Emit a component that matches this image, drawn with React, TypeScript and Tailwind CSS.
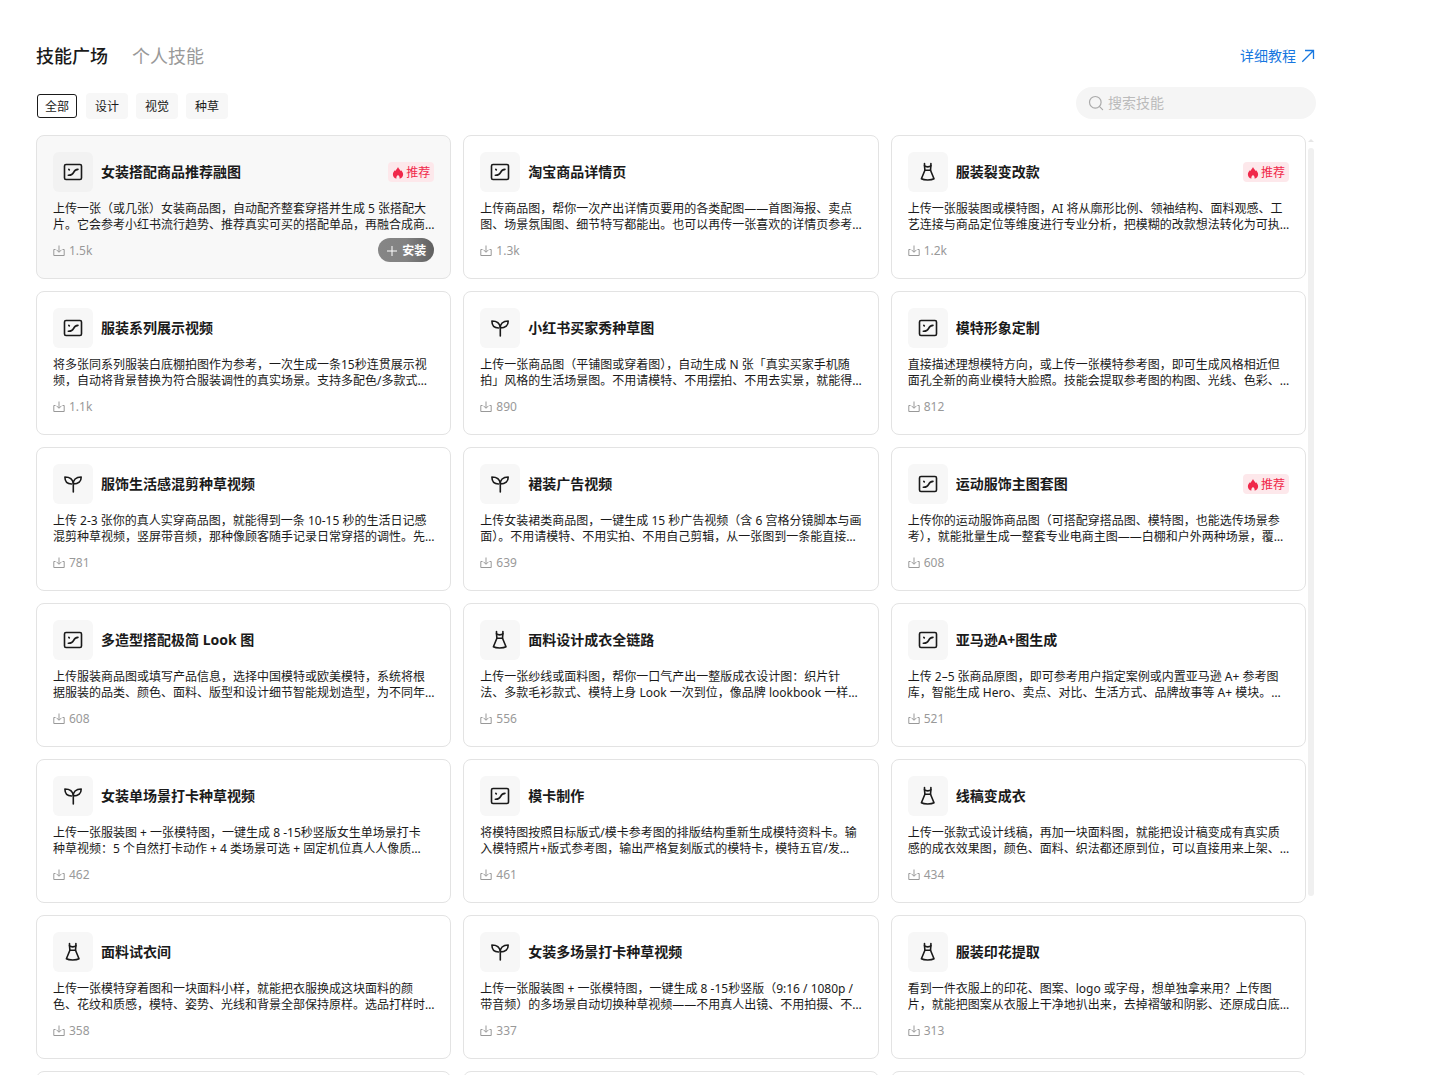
type IconName = 'image' | 'sprout' | 'dress'

type Skill = {
  title: string
  desc: string
  count: string
  icon: IconName
  hot?: boolean
  active?: boolean
}

const skills: Skill[] = [
  { title: '女装搭配商品推荐融图', icon: 'image', count: '1.5k', hot: true, active: true, desc: '上传一张（或几张）女装商品图，自动配齐整套穿搭并生成 5 张搭配大片。它会参考小红书流行趋势、推荐真实可买的搭配单品，再融合成商…' },
  { title: '淘宝商品详情页', icon: 'image', count: '1.3k', desc: '上传商品图，帮你一次产出详情页要用的各类配图——首图海报、卖点图、场景氛围图、细节特写都能出。也可以再传一张喜欢的详情页参考…' },
  { title: '服装裂变改款', icon: 'dress', count: '1.2k', hot: true, desc: '上传一张服装图或模特图，AI 将从廓形比例、领袖结构、面料观感、工艺连接与商品定位等维度进行专业分析，把模糊的改款想法转化为可执…' },
  { title: '服装系列展示视频', icon: 'image', count: '1.1k', desc: '将多张同系列服装白底棚拍图作为参考，一次生成一条15秒连贯展示视频，自动将背景替换为符合服装调性的真实场景。支持多配色/多款式…' },
  { title: '小红书买家秀种草图', icon: 'sprout', count: '890', desc: '上传一张商品图（平铺图或穿着图），自动生成 N 张「真实买家手机随拍」风格的生活场景图。不用请模特、不用摆拍、不用去实景，就能得…' },
  { title: '模特形象定制', icon: 'image', count: '812', desc: '直接描述理想模特方向，或上传一张模特参考图，即可生成风格相近但面孔全新的商业模特大脸照。技能会提取参考图的构图、光线、色彩、…' },
  { title: '服饰生活感混剪种草视频', icon: 'sprout', count: '781', desc: '上传 2-3 张你的真人实穿商品图，就能得到一条 10-15 秒的生活日记感混剪种草视频，竖屏带音频，那种像顾客随手记录日常穿搭的调性。先…' },
  { title: '裙装广告视频', icon: 'sprout', count: '639', desc: '上传女装裙类商品图，一键生成 15 秒广告视频（含 6 宫格分镜脚本与画面）。不用请模特、不用实拍、不用自己剪辑，从一张图到一条能直接…' },
  { title: '运动服饰主图套图', icon: 'image', count: '608', hot: true, desc: '上传你的运动服饰商品图（可搭配穿搭品图、模特图，也能选传场景参考），就能批量生成一整套专业电商主图——白棚和户外两种场景，覆…' },
  { title: '多造型搭配极简 Look 图', icon: 'image', count: '608', desc: '上传服装商品图或填写产品信息，选择中国模特或欧美模特，系统将根据服装的品类、颜色、面料、版型和设计细节智能规划造型，为不同年…' },
  { title: '面料设计成衣全链路', icon: 'dress', count: '556', desc: '上传一张纱线或面料图，帮你一口气产出一整版成衣设计图：织片针法、多款毛衫款式、模特上身 Look 一次到位，像品牌 lookbook 一样…' },
  { title: '亚马逊A+图生成', icon: 'image', count: '521', desc: '上传 2–5 张商品原图，即可参考用户指定案例或内置亚马逊 A+ 参考图库，智能生成 Hero、卖点、对比、生活方式、品牌故事等 A+ 模块。…' },
  { title: '女装单场景打卡种草视频', icon: 'sprout', count: '462', desc: '上传一张服装图 + 一张模特图，一键生成 8 -15秒竖版女生单场景打卡\n种草视频：5 个自然打卡动作 + 4 类场景可选 + 固定机位真人人像质…' },
  { title: '模卡制作', icon: 'image', count: '461', desc: '将模特图按照目标版式/模卡参考图的排版结构重新生成模特资料卡。输入模特照片+版式参考图，输出严格复刻版式的模特卡，模特五官/发…' },
  { title: '线稿变成衣', icon: 'dress', count: '434', desc: '上传一张款式设计线稿，再加一块面料图，就能把设计稿变成有真实质感的成衣效果图，颜色、面料、织法都还原到位，可以直接用来上架、…' },
  { title: '面料试衣间', icon: 'dress', count: '358', desc: '上传一张模特穿着图和一块面料小样，就能把衣服换成这块面料的颜色、花纹和质感，模特、姿势、光线和背景全部保持原样。选品打样时…' },
  { title: '女装多场景打卡种草视频', icon: 'sprout', count: '337', desc: '上传一张服装图 + 一张模特图，一键生成 8 -15秒竖版（9:16 / 1080p / 带音频）的多场景自动切换种草视频——不用真人出镜、不用拍摄、不…' },
  { title: '服装印花提取', icon: 'dress', count: '313', desc: '看到一件衣服上的印花、图案、logo 或字母，想单独拿来用？上传图片，就能把图案从衣服上干净地扒出来，去掉褶皱和阴影、还原成白底…' },
]

const filters = ['全部', '设计', '视觉', '种草']

function SkillIcon({ name }: { name: IconName }) {
  return (
    <svg viewBox="0 0 20 20" className="size-5" fill="none" stroke="currentColor" strokeWidth="1.6" strokeLinecap="round" strokeLinejoin="round" aria-hidden="true">
      {name === 'image' && (
        <>
          <rect x="1.5" y="2.5" width="17" height="15" rx="1.5" />
          <path d="M5.3 13.2c3 .1 4.300-.6 5.200-2.600.9-2.100 2.100-3 4.500-3.200" />
          <path d="M5.8 7.400l.5.5" />
        </>
      )}
      {name === 'sprout' && (
        <>
          <path d="M10.300 10C10 6 12.800 3 18.200 3c.1 4.500-2.700 7-7.900 7v8" />
          <path d="M10.300 9.500C9.800 5.300 7.200 3 1.900 3c0 4.400 2.600 7 6.700 7" />
        </>
      )}
      {name === 'dress' && (
        <>
          <path d="M6.500 1.500v2.300c.8.9 1.700 1.100 3.200 1.100s2.400-.2 3.200-1.100V1.500" />
          <path d="M6.500 3.800L6.900 8.300 3.400 16.800c2.600 1.600 10 1.600 12.600 0L12.500 8.300l.4-4.500" />
          <path d="M6.900 8.300h5.600" />
        </>
      )}
    </svg>
  )
}

function SkillCard({ skill }: { skill: Skill }) {
  return (
    <article className={`min-w-0 rounded-lg border border-[#e3e3e3] p-4 ${skill.active ? 'bg-[#f8f8f8]' : 'bg-white'}`}>
      <div className="flex items-center gap-2">
        <div className={`flex size-10 shrink-0 items-center justify-center rounded-md ${skill.active ? 'bg-[#f2f2f2]' : 'bg-[#f7f7f7]'}`}>
          <SkillIcon name={skill.icon} />
        </div>
        <h2 className="min-w-0 flex-1 truncate text-sm font-bold">{skill.title}</h2>
        {skill.hot && (
          <span className="flex h-5 items-center gap-0.5 rounded bg-[#fde8eb] px-1 pt-0.5 text-xs text-[#f0284a]">
            <svg viewBox="0 0 12 12" className="size-3" fill="currentColor" aria-hidden="true">
              <path d="M6 .1c.4 1.500 1.900 2.500 2.700 3.900.2-.2.3-.4.4-.7 1.200 1.200 2 2.600 2 4.100 0 2.200-1.500 3.900-3.600 4.200.5-1.300-.3-2.700-1.500-3.500-1.200.8-2 2.200-1.500 3.500C2.400 11.300.9 9.600.9 7.400c0-1.500.8-2.900 2-4.100.1.300.2.5.4.7C4.100 2.600 5.600 1.600 6 .1z" />
            </svg>
            推荐
          </span>
        )}
      </div>
      <p className="mt-[9px] -mr-0.5 line-clamp-2 text-xs/4 whitespace-pre-line">{skill.desc}</p>
      <div className="mt-[5px] flex h-6 items-center justify-between">
        <span className="flex items-center gap-1 pt-0.5 text-xs text-[#999]">
          <svg viewBox="0 0 12 12" className="size-3" fill="none" stroke="currentColor" aria-hidden="true">
            <path d="M2.500 4.500h-1.700v6h10.400v-6H9.500M6 .5v6.500M3.500 4.800L6 7.300l2.500-2.500" />
          </svg>
          {skill.count}
        </span>
        {skill.active && (
          <button type="button" className="flex h-6 items-center gap-1 rounded-full bg-linear-to-r from-[#868686] via-[#828282] to-[#606060] px-2 pt-0.5 text-xs font-semibold text-white">
            <svg viewBox="0 0 12 12" className="size-3" stroke="currentColor" aria-hidden="true">
              <path d="M6 1v10M1 6h10" />
            </svg>
            安装
          </button>
        )}
      </div>
    </article>
  )
}

export default function App() {
  return (
    <main className="flex h-screen flex-col overflow-hidden bg-white pt-10 pr-[129px] pl-9 font-['Noto_Sans','Noto_Sans_CJK_SC',sans-serif] text-[#1a1a1a]" lang="zh-CN">
      <header className="flex h-8 shrink-0 items-center justify-between">
        <nav className="flex gap-6 text-lg">
          <button type="button" className="font-medium">技能广场</button>
          <button type="button" className="text-[#999]">个人技能</button>
        </nav>
        <a href="#tutorial" className="flex items-center gap-1 text-sm text-[#1677e0]">
          详细教程
          <svg viewBox="0 0 16 16" className="size-4" fill="none" stroke="currentColor" strokeWidth="1.3" aria-hidden="true">
            <path d="M2.300 13.700L13.500 2.500M5 2.500h8.500V11" />
          </svg>
        </a>
      </header>

      <div className="mt-[15px] flex h-8 shrink-0 items-start justify-between">
        <div className="mt-1.5 flex gap-2">
          {filters.map((name, i) => (
            <button
              key={name}
              type="button"
              className={i === 0
                ? 'm-px h-6 w-10 rounded-[3px] border border-[#1a1a1a] bg-white pt-0.5 text-xs'
                : 'h-[26px] w-[42px] rounded bg-[#f7f7f7] pt-0.5 text-xs'}
            >
              {name}
            </button>
          ))}
        </div>
        <label className="flex h-8 w-60 items-center gap-1 rounded-full bg-[#f5f5f5] px-3 text-[#aaa]">
          <svg viewBox="0 0 16 16" className="size-4 shrink-0" fill="none" stroke="currentColor" strokeWidth="1.2" strokeLinecap="round" aria-hidden="true">
            <circle cx="7.3" cy="7.3" r="5.8" />
            <path d="M11.600 11.600l3 3" />
          </svg>
          <input type="text" aria-label="搜索技能" placeholder="搜索技能" className="min-w-0 flex-1 bg-transparent text-sm outline-none placeholder:text-[#bbb]" />
        </label>
      </div>

      <div className="mt-4 flex min-h-0 flex-1 items-start gap-0.5">
        <section className="grid min-w-0 flex-1 auto-rows-[144px] grid-cols-3 gap-3">
          {skills.map((skill) => (
            <SkillCard key={skill.title} skill={skill} />
          ))}
          {[0, 1, 2].map((n) => (
            <div key={n} className="rounded-lg border border-[#e3e3e3]" />
          ))}
        </section>
        <div className="mr-0.5 flex h-[81%] w-1.5 shrink-0 flex-col items-center gap-1.5 pt-1" aria-hidden="true">
          <svg viewBox="0 0 6 3" className="h-[3px] w-1.5 shrink-0 fill-[#e6e6e6]">
            <path d="M3 0l3 3H0z" />
          </svg>
          <div className="w-full flex-1 rounded-sm bg-[#f0f0f0]" />
        </div>
      </div>
    </main>
  )
}
